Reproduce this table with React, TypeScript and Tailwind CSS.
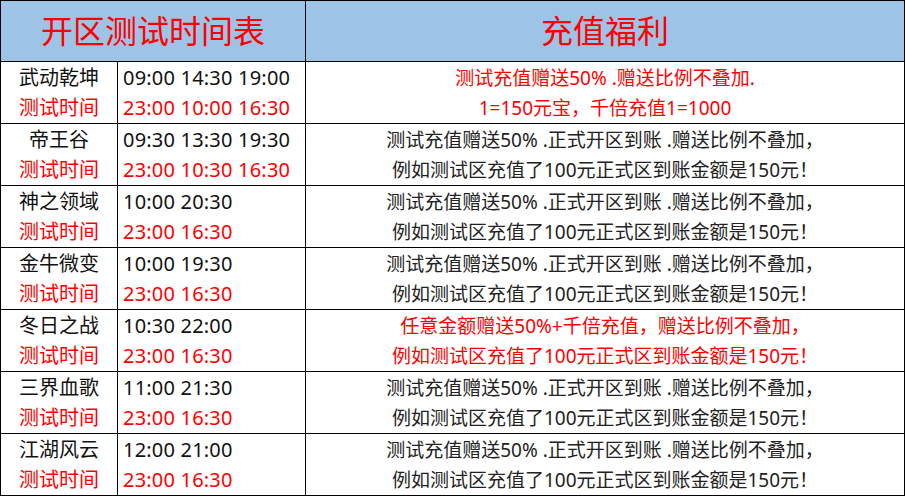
import React from 'react';

interface Row {
  name: string;
  open: string;
  test: string;
  lines: [string, string];
  red?: boolean;
}

const STD: [string, string] = [
  '测试充值赠送50% .正式开区到账 .赠送比例不叠加，',
  '例如测试区充值了100元正式区到账金额是150元！',
];

const rows: Row[] = [
  {
    name: '武动乾坤',
    open: '09:00 14:30 19:00',
    test: '23:00 10:00 16:30',
    lines: ['测试充值赠送50% .赠送比例不叠加.', '1=150元宝，千倍充值1=1000'],
    red: true,
  },
  { name: '帝王谷', open: '09:30 13:30 19:30', test: '23:00 10:30 16:30', lines: STD },
  { name: '神之领域', open: '10:00 20:30', test: '23:00 16:30', lines: STD },
  { name: '金牛微变', open: '10:00 19:30', test: '23:00 16:30', lines: STD },
  {
    name: '冬日之战',
    open: '10:30 22:00',
    test: '23:00 16:30',
    lines: ['任意金额赠送50%+千倍充值，赠送比例不叠加，', '例如测试区充值了100元正式区到账金额是150元！'],
    red: true,
  },
  { name: '三界血歌', open: '11:00 21:30', test: '23:00 16:30', lines: STD },
  { name: '江湖风云', open: '12:00 21:00', test: '23:00 16:30', lines: STD },
];

export default function App() {
  return (
    <div
      className="w-[905px] h-[497px] bg-white overflow-hidden"
      style={{ fontFamily: '"Noto Sans", "Noto Sans CJK SC", sans-serif' }}
    >
      <div className="grid grid-cols-[117px_188px_599px] border-l border-t border-black">
        {/* header */}
        <div className="col-span-2 h-[61px] flex items-center justify-center bg-[#9dc3e6] border-r border-b border-black text-[#ff0000] text-[32px] leading-none">
          开区测试时间表
        </div>
        <div className="h-[61px] flex items-center justify-center bg-[#9dc3e6] border-r border-b border-black text-[#ff0000] text-[32px] leading-none">
          充值福利
        </div>

        {rows.map((r) => (
          <React.Fragment key={r.name}>
            <div className="h-[62px] flex flex-col justify-center items-center border-r border-b border-black text-[20px] leading-[30px]">
              <span className="text-[#111]">{r.name}</span>
              <span className="text-[#ff0000]">测试时间</span>
            </div>
            <div className="h-[62px] flex flex-col justify-center pl-[5px] border-r border-b border-black text-[20px] leading-[30px] tracking-[0.2px]">
              <span className="text-[#111]">{r.open}</span>
              <span className="text-[#ff0000]">{r.test}</span>
            </div>
            <div
              className={`h-[62px] flex flex-col justify-center items-center border-r border-b border-black text-[19px] leading-[30px] ${
                r.red ? 'text-[#ff0000]' : 'text-[#222]'
              }`}
            >
              <span>{r.lines[0]}</span>
              <span>{r.lines[1]}</span>
            </div>
          </React.Fragment>
        ))}
      </div>
    </div>
  );
}
